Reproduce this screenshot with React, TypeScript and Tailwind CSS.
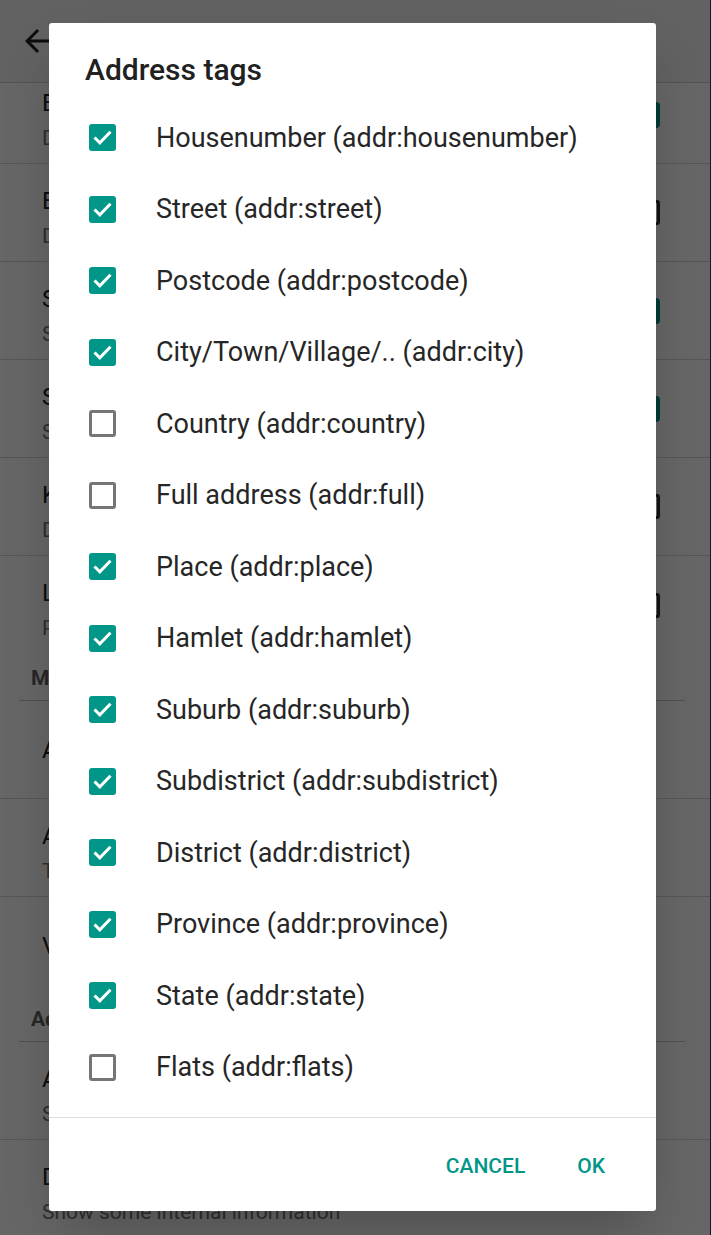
import React from 'react';

type Tag = { label: string; checked: boolean };

const tags: Tag[] = [
  { label: 'Housenumber (addr:housenumber)', checked: true },
  { label: 'Street (addr:street)', checked: true },
  { label: 'Postcode (addr:postcode)', checked: true },
  { label: 'City/Town/Village/.. (addr:city)', checked: true },
  { label: 'Country (addr:country)', checked: false },
  { label: 'Full address (addr:full)', checked: false },
  { label: 'Place (addr:place)', checked: true },
  { label: 'Hamlet (addr:hamlet)', checked: true },
  { label: 'Suburb (addr:suburb)', checked: true },
  { label: 'Subdistrict (addr:subdistrict)', checked: true },
  { label: 'District (addr:district)', checked: true },
  { label: 'Province (addr:province)', checked: true },
  { label: 'State (addr:state)', checked: true },
  { label: 'Flats (addr:flats)', checked: false },
];

const CheckBox = ({ checked }: { checked: boolean }) =>
  checked ? (
    <div className="w-[27px] h-[27px] rounded-[3px] bg-[#009688] flex items-center justify-center shrink-0">
      <svg width="27" height="27" viewBox="0 0 27 27">
        <path d="M5.5 13.5 L10.8 18.8 L21.5 7.8" fill="none" stroke="white" strokeWidth="3" />
      </svg>
    </div>
  ) : (
    <div className="w-[27px] h-[27px] rounded-[3px] border-[3px] border-[#757575] bg-white shrink-0" />
  );

// widgets of the settings screen behind the dialog
const Switch = () => <div className="w-[36px] h-[26px] rounded-[4px] bg-[#009688] shrink-0" />;
const Box = () => <div className="w-[25px] h-[25px] rounded-[3px] border-[3px] border-[#333] shrink-0" />;

const PrefRow = ({
  title,
  summary,
  widget,
  divider = true,
}: {
  title: string;
  summary?: string;
  widget?: 'switch' | 'box';
  divider?: boolean;
}) => (
  <div className={`h-[98px] flex items-center pl-[42px] pr-[50px] ${divider ? 'border-b border-[#d4d4d4]' : ''}`}>
    <div className={`flex-1 flex flex-col ${summary ? 'self-start pt-[21px]' : ''}`}>
      <div className="text-[24px] leading-[32px] text-[#212121]">{title}</div>
      {summary && <div className="mt-[5px] text-[21px] leading-[28px] text-[#757575]">{summary}</div>}
    </div>
    {widget === 'switch' && <Switch />}
    {widget === 'box' && <Box />}
  </div>
);

const Header = ({ text }: { text: string }) => (
  <div className="h-[47px] flex flex-col">
    <div className="flex-1 flex items-center pl-[31px] pt-[4px] text-[21px] font-bold text-[#616161]">{text}</div>
    <div className="ml-[19px] mr-[25px] h-px bg-[#c8c8c8]" />
  </div>
);

export default function App() {
  return (
    <div
      className="relative w-[711px] h-[1235px] overflow-hidden bg-white border-r border-[#161630] flex flex-col"
      style={{ fontFamily: 'Roboto, "Noto Sans", sans-serif' }}
    >
      {/* app bar */}
      <div className="h-[83px] shrink-0 bg-[#f5f5f5] border-b border-[#cfcfcf] flex items-center pl-[19px] relative z-10">
        <svg width="36" height="36" viewBox="0 0 24 24" fill="#212121">
          <path d="M20 11H7.83l5.59-5.59L12 4l-8 8 8 8 1.41-1.41L7.83 13H20v-2z" />
        </svg>
        <span className="ml-[40px] text-[30px] font-medium text-[#212121]">Settings</span>
      </div>

      {/* settings list */}
      <div className="flex-1 overflow-hidden">
        <div className="-mt-[17px]">
          <PrefRow title="Expert mode" summary="Disable some safeguards" widget="switch" />
          <PrefRow title="Enable all quests" summary="Do not hide any quests" widget="box" />
          <PrefRow title="Show notes" summary="Show OSM notes on the map" widget="switch" />
          <PrefRow title="Solved notes" summary="Show solved notes" widget="switch" />
          <PrefRow title="Keep screen on" summary="Do not turn the display off" widget="box" />
          <PrefRow title="Load data" summary="Pre-load data for the area" widget="box" divider={false} />
          <Header text="Map" />
          <PrefRow title="Address tags" />
          <PrefRow title="Autoupload" summary="Tags are uploaded automatically" />
          <PrefRow title="Validation" divider={false} />
          <Header text="Advanced" />
          <PrefRow title="Advanced settings" summary="Show advanced options" />
          <PrefRow title="Debug mode" summary="Show some internal information" divider={false} />
        </div>
      </div>

      {/* scrim */}
      <div className="absolute inset-0 z-20 bg-black/60" />

      {/* dialog */}
      <div className="absolute z-30 left-[49px] top-[23px] w-[607px] h-[1188px] bg-white rounded-[3px] shadow-2xl flex flex-col">
        <div className="pt-[29px] pl-[36px] text-[30px] leading-[36px] font-medium text-[#212121]">Address tags</div>
        <div className="mt-[14px] flex-1">
          {tags.map((t) => (
            <div key={t.label} className="h-[71.5px] flex items-center pl-[40px]">
              <CheckBox checked={t.checked} />
              <span className="ml-[40px] text-[27px] text-[#262626]">{t.label}</span>
            </div>
          ))}
        </div>
        <div className="h-px bg-[#dcdcdc]" />
        <div className="h-[93px] flex items-center justify-end pt-[5px] pr-[51px] gap-[52px] text-[21px] font-medium text-[#009688]">
          <span>CANCEL</span>
          <span>OK</span>
        </div>
      </div>
    </div>
  );
}
